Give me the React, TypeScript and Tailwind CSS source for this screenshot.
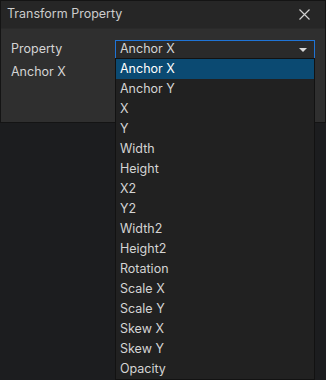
import React from "react";

const options = [
  "Anchor X",
  "Anchor Y",
  "X",
  "Y",
  "Width",
  "Height",
  "X2",
  "Y2",
  "Width2",
  "Height2",
  "Rotation",
  "Scale X",
  "Scale Y",
  "Skew X",
  "Skew Y",
  "Opacity",
];

function App() {
  return (
    <div className="w-[326px] h-[380px] bg-[#1c1d1f] overflow-hidden font-['Inter',sans-serif] text-[12.5px] text-[#d4d4d4]">
      <div className="relative border border-[#141414] bg-[#2f2f2f]">
        <div className="flex items-center justify-between h-[28px] bg-[#262626] pl-[6px] pr-[15px] border-b border-[#2a2a2a]">
          <span className="text-[#cccccc]">Transform Property</span>
          <svg width="11" height="11" viewBox="0 0 11 11" className="text-[#d0d0d0]">
            <path d="M0.5 0.5 L10.5 10.5 M10.5 0.5 L0.5 10.5" stroke="currentColor" strokeWidth="1.2" />
          </svg>
        </div>
        <div className="grid grid-cols-[104px_1fr] gap-y-[4px] pl-[10px] pr-[10px] pt-[11px] pb-[40px]">
          <div className="h-[19px] flex items-center">Property</div>
          <div className="relative">
            <div className="h-[19px] flex items-center justify-between border border-[#1f74d6] bg-[#2a2a2a] pl-[4px] pr-[7px]">
              <span>Anchor X</span>
              <svg width="8" height="4" viewBox="0 0 8 4">
                <path d="M0 0 L8 0 L4 4 Z" fill="#d8d8d8" />
              </svg>
            </div>
            <div className="absolute left-0 right-0 top-[18px] z-10 border border-[#121212] bg-[#212121]">
              {options.map((o, i) => (
                <div
                  key={o}
                  className={
                    "h-[20px] flex items-center pl-[4px] " +
                    (i === 0 ? "bg-[#0b4a72] text-white" : "")
                  }
                >
                  {o}
                </div>
              ))}
            </div>
          </div>
          <div className="h-[19px] flex items-center">Anchor X</div>
          <div />
        </div>
      </div>
    </div>
  );
}

export default App;
